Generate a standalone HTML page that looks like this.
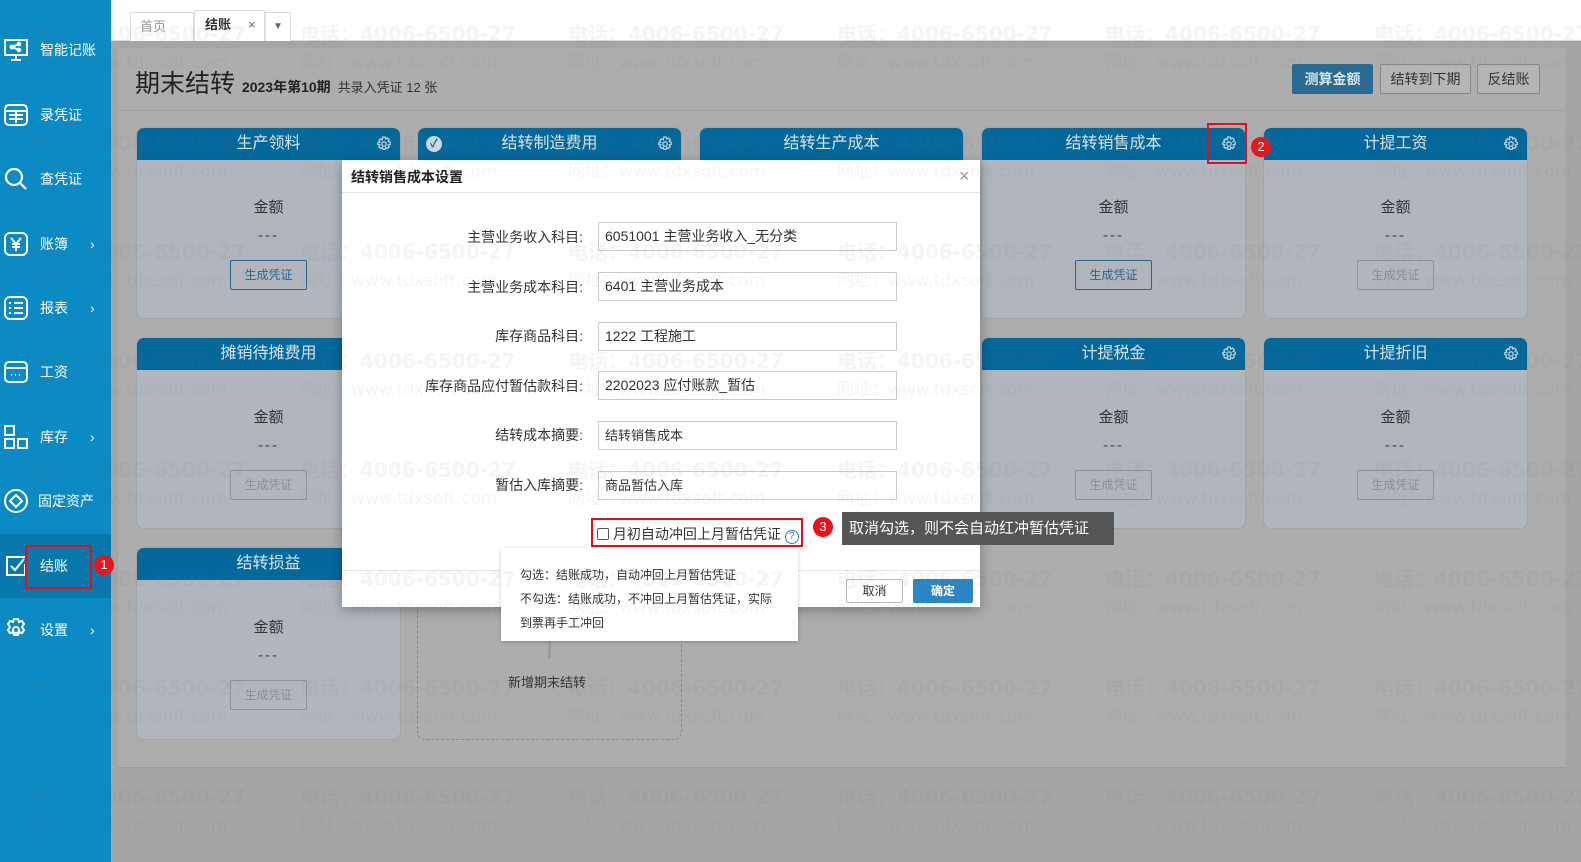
<!DOCTYPE html>
<html><head><meta charset="utf-8"><style>
*{box-sizing:border-box;margin:0;padding:0}
body{width:1581px;height:862px;overflow:hidden;position:relative;background:#a5a5a5;font-family:"Liberation Sans","Noto Sans CJK SC",sans-serif;color:#333}
.abs{position:absolute}
#side{left:0;top:0;width:111px;height:862px;background:#0b8ac3}
.si{position:absolute;left:0;width:111px;height:64px;color:#fff;font-size:14px}
.si .ic{position:absolute;left:4px;top:50%;transform:translateY(-50%);width:24px;height:24px}
.si .lb{position:absolute;left:40px;top:50%;transform:translateY(-50%)}
.si .ar{position:absolute;left:90px;top:50%;transform:translateY(-50%);font-size:14px}
#tabs{left:111px;top:0;width:1470px;height:41px;background:#fff;border-bottom:1px solid #ddd}
.tab{position:absolute;top:12px;height:29px;border:1px solid #ddd;border-bottom:none;font-size:13px;line-height:28px;background:#fff}
#panel{left:118px;top:48px;width:1447px;height:720px;background:#adadad;border-bottom:1px solid #9c9c9c}
.card{position:absolute;width:265px;border:1px solid #9fa5ab;border-radius:8px;background:#b0b6bc;overflow:hidden}
.card .hd{height:32px;background:#05689b;color:#d8e4ec;font-size:16px;text-align:center;line-height:32px;position:relative}
.card .amt{text-align:center;font-size:15px;color:#333;margin-top:36px}
.card .dash{text-align:center;font-size:15px;color:#444;margin-top:10px;letter-spacing:2px}
.card .btn{width:77px;height:30px;margin:16px auto 0;border:1px solid #8d9196;border-radius:2px;font-size:12px;text-align:center;line-height:28px;color:#8b8f93}
.card .btn.on{border-color:#2a6590;color:#2a6590}
.gear{position:absolute;right:8px;top:8px;width:16px;height:16px}
#modal{left:342px;top:160px;width:638px;height:447px;background:#fff;box-shadow:0 3px 12px rgba(0,0,0,.3)}
.fl{position:absolute;right:397px;font-size:14px;color:#333;text-align:right;white-space:nowrap}
.in{position:absolute;left:256px;width:299px;height:29px;border:1px solid #ccc;font-size:14px;line-height:27px;padding-left:6px;color:#333}
.wm{position:absolute;font-size:20px;font-weight:bold;color:rgba(110,110,110,.07);white-space:nowrap;pointer-events:none;font-family:"DejaVu Sans","Noto Sans CJK SC",sans-serif}
.wm2{position:absolute;font-size:17px;color:rgba(110,110,110,.07);white-space:nowrap;pointer-events:none;font-family:"DejaVu Sans","Noto Sans CJK SC",sans-serif}
.badge{position:absolute;width:20px;height:20px;border-radius:50%;background:#e8141b;color:#fff;font-size:13px;text-align:center;line-height:20px}
.redbox{position:absolute;border:2px solid #e2101a}
</style></head><body>

<div id="side" class="abs">
  <div class="si" style="top:18px"><svg class="ic" viewBox="0 0 24 24" fill="none" stroke="#fff" stroke-width="2"><rect x="1" y="2" width="22" height="15"/><path d="M12 17v4M7 22h10"/><circle cx="8" cy="9" r="1.5" fill="#fff"/><circle cx="15" cy="6" r="1.3" fill="#fff"/><circle cx="15" cy="12" r="1.3" fill="#fff"/><path d="M8 9l7-3M8 9l7 3"/></svg><span class="lb">智能记账</span></div>
  <div class="si" style="top:83px"><svg class="ic" viewBox="0 0 24 24" fill="none" stroke="#fff" stroke-width="2"><rect x="1" y="2" width="22" height="20" rx="4"/><path d="M1 8h22M5 12h14M5 16h14M12 8v12"/></svg><span class="lb">录凭证</span></div>
  <div class="si" style="top:147px"><svg class="ic" viewBox="0 0 24 24" fill="none" stroke="#fff" stroke-width="2.2"><circle cx="10" cy="10" r="8"/><path d="M16 16l6 6"/></svg><span class="lb">查凭证</span></div>
  <div class="si" style="top:212px"><svg class="ic" viewBox="0 0 24 24" fill="none" stroke="#fff" stroke-width="2"><rect x="1" y="1" width="22" height="22" rx="5"/><path d="M7 6l5 6 5-6M12 12v7M8 12h8M8 15h8"/></svg><span class="lb">账簿</span><span class="ar">›</span></div>
  <div class="si" style="top:276px"><svg class="ic" viewBox="0 0 24 24" fill="none" stroke="#fff" stroke-width="2"><rect x="1" y="1" width="22" height="22" rx="5"/><path d="M5 7h2M10 7h9M5 12h2M10 12h9M5 17h2M10 17h9"/></svg><span class="lb">报表</span><span class="ar">›</span></div>
  <div class="si" style="top:340px"><svg class="ic" viewBox="0 0 24 24" fill="none" stroke="#fff" stroke-width="2"><rect x="1" y="2" width="22" height="20" rx="4"/><path d="M1 8h22M7 15h1M11 15h1M15 15h1"/></svg><span class="lb">工资</span></div>
  <div class="si" style="top:405px"><svg class="ic" viewBox="0 0 24 24" fill="none" stroke="#fff" stroke-width="2"><rect x="1" y="1" width="9" height="9"/><rect x="1" y="14" width="9" height="9"/><rect x="14" y="14" width="9" height="9"/></svg><span class="lb">库存</span><span class="ar">›</span></div>
  <div class="si" style="top:469px"><svg class="ic" viewBox="0 0 24 24" fill="none" stroke="#fff" stroke-width="2"><circle cx="12" cy="12" r="11"/><path d="M12 6l6 6-6 6-6-6z"/></svg><span class="lb" style="left:38px">固定资产</span></div>
  <div class="si" style="top:534px;background:#0878ac"><svg class="ic" viewBox="0 0 24 24" fill="none" stroke="#fff" stroke-width="2"><path d="M21 3H3v18h18V10"/><path d="M7 12l4 4 9-11"/></svg><span class="lb">结账</span></div>
  <div class="si" style="top:598px"><svg class="ic" viewBox="0 0 24 24" fill="none" stroke="#fff" stroke-width="2"><path d="M10 1h4l1 3 3-1 2 3-2 3 2 3-2 3-3-1-1 3h-4l-1-3-3 1-2-3 2-3-2-3 2-3 3 1z"/><circle cx="12" cy="12" r="3"/></svg><span class="lb">设置</span><span class="ar">›</span></div>
</div>
<div class="redbox" style="left:25px;top:545px;width:67px;height:44px"></div>
<div class="badge" style="left:94px;top:555px">1</div>

<div id="tabs" class="abs">
  <div class="tab" style="left:19px;width:64px;color:#999;padding-left:9px">首页</div>
  <div class="tab" style="left:83px;width:71px;font-weight:bold;color:#333;padding-left:10px;top:10px;height:31px">结账<span style="position:absolute;left:53px;font-weight:normal;color:#666">×</span></div>
  <div class="tab" style="left:154px;width:26px;text-align:center;color:#666;font-size:10px">▼</div>
</div>

<div id="panel" class="abs">
  <div class="abs" style="left:17px;top:16px;font-size:25px;color:#222">期末结转 <span style="font-size:14px;font-weight:bold">2023年第10期</span> <span style="font-size:13px;color:#333">共录入凭证 12 张</span></div>
  <div class="abs" style="left:0;top:62px;width:1447px;border-top:1px solid #a0a0a0"></div>
  <div class="abs" style="left:1174px;top:16px;width:81px;height:30px;background:#2a6b93;border-radius:2px;color:#d8e4ec;font-size:14px;font-weight:bold;text-align:center;line-height:30px">测算金额</div>
  <div class="abs" style="left:1262px;top:16px;width:91px;height:30px;border:1px solid #888;border-radius:2px;font-size:14px;text-align:center;line-height:28px;background:#b5b5b5">结转到下期</div>
  <div class="abs" style="left:1359px;top:16px;width:63px;height:30px;border:1px solid #888;border-radius:2px;font-size:14px;text-align:center;line-height:28px;background:#b5b5b5">反结账</div>
</div>

<div class="card" style="left:136px;top:127px;height:192px"><div class="hd">生产领料<svg class="gear" viewBox="0 0 16 16" fill="none" stroke="#c0d4e2" stroke-width="1.3"><path d="M6.8 1h2.4l.5 2 1.8-1 1.7 1.7-1 1.8 2 .5v2.4l-2 .5 1 1.8-1.7 1.7-1.8-1-.5 2H6.8l-.5-2-1.8 1-1.7-1.7 1-1.8-2-.5V6.8l2-.5-1-1.8 1.7-1.7 1.8 1z"/><circle cx="8" cy="8" r="2.2"/></svg></div><div class="amt">金额</div><div class="dash">---</div><div class="btn on">生成凭证</div></div>
<div class="card" style="left:417px;top:127px;height:192px"><div class="hd"><span style="position:absolute;left:8px;top:8px;width:16px;height:16px;border-radius:50%;background:#cfdbe4;color:#05689b;font-size:11px;line-height:16px;font-weight:bold">✓</span>结转制造费用<svg class="gear" viewBox="0 0 16 16" fill="none" stroke="#c0d4e2" stroke-width="1.3"><path d="M6.8 1h2.4l.5 2 1.8-1 1.7 1.7-1 1.8 2 .5v2.4l-2 .5 1 1.8-1.7 1.7-1.8-1-.5 2H6.8l-.5-2-1.8 1-1.7-1.7 1-1.8-2-.5V6.8l2-.5-1-1.8 1.7-1.7 1.8 1z"/><circle cx="8" cy="8" r="2.2"/></svg></div></div>
<div class="card" style="left:699px;top:127px;height:192px"><div class="hd">结转生产成本</div></div>
<div class="card" style="left:981px;top:127px;height:192px"><div class="hd">结转销售成本<svg class="gear" viewBox="0 0 16 16" fill="none" stroke="#c0d4e2" stroke-width="1.3"><path d="M6.8 1h2.4l.5 2 1.8-1 1.7 1.7-1 1.8 2 .5v2.4l-2 .5 1 1.8-1.7 1.7-1.8-1-.5 2H6.8l-.5-2-1.8 1-1.7-1.7 1-1.8-2-.5V6.8l2-.5-1-1.8 1.7-1.7 1.8 1z"/><circle cx="8" cy="8" r="2.2"/></svg></div><div class="amt">金额</div><div class="dash">---</div><div class="btn on">生成凭证</div></div>
<div class="card" style="left:1263px;top:127px;height:192px"><div class="hd">计提工资<svg class="gear" viewBox="0 0 16 16" fill="none" stroke="#c0d4e2" stroke-width="1.3"><path d="M6.8 1h2.4l.5 2 1.8-1 1.7 1.7-1 1.8 2 .5v2.4l-2 .5 1 1.8-1.7 1.7-1.8-1-.5 2H6.8l-.5-2-1.8 1-1.7-1.7 1-1.8-2-.5V6.8l2-.5-1-1.8 1.7-1.7 1.8 1z"/><circle cx="8" cy="8" r="2.2"/></svg></div><div class="amt">金额</div><div class="dash">---</div><div class="btn">生成凭证</div></div>
<div class="card" style="left:136px;top:337px;height:192px"><div class="hd">摊销待摊费用</div><div class="amt">金额</div><div class="dash">---</div><div class="btn">生成凭证</div></div>
<div class="card" style="left:981px;top:337px;height:192px"><div class="hd">计提税金<svg class="gear" viewBox="0 0 16 16" fill="none" stroke="#c0d4e2" stroke-width="1.3"><path d="M6.8 1h2.4l.5 2 1.8-1 1.7 1.7-1 1.8 2 .5v2.4l-2 .5 1 1.8-1.7 1.7-1.8-1-.5 2H6.8l-.5-2-1.8 1-1.7-1.7 1-1.8-2-.5V6.8l2-.5-1-1.8 1.7-1.7 1.8 1z"/><circle cx="8" cy="8" r="2.2"/></svg></div><div class="amt">金额</div><div class="dash">---</div><div class="btn">生成凭证</div></div>
<div class="card" style="left:1263px;top:337px;height:192px"><div class="hd">计提折旧<svg class="gear" viewBox="0 0 16 16" fill="none" stroke="#c0d4e2" stroke-width="1.3"><path d="M6.8 1h2.4l.5 2 1.8-1 1.7 1.7-1 1.8 2 .5v2.4l-2 .5 1 1.8-1.7 1.7-1.8-1-.5 2H6.8l-.5-2-1.8 1-1.7-1.7 1-1.8-2-.5V6.8l2-.5-1-1.8 1.7-1.7 1.8 1z"/><circle cx="8" cy="8" r="2.2"/></svg></div><div class="amt">金额</div><div class="dash">---</div><div class="btn">生成凭证</div></div>
<div class="card" style="left:136px;top:547px;height:193px"><div class="hd">结转损益</div><div class="amt">金额</div><div class="dash">---</div><div class="btn">生成凭证</div></div>
<div class="abs" style="left:417px;top:547px;width:265px;height:193px;border:1px dashed #888;border-radius:8px"></div>
<div class="abs" style="left:548px;top:640px;width:3px;height:18px;background:#999"></div>
<div class="abs" style="left:508px;top:672px;font-size:13px;color:#333">新增期末结转</div>

<div class="redbox" style="left:1207px;top:123px;width:40px;height:41px"></div>
<div class="badge" style="left:1251px;top:137px">2</div>

<div id="modal" class="abs">
  <div class="abs" style="left:0;top:0;width:638px;height:33px;border-bottom:1px solid #e5e5e5;font-size:14px;font-weight:bold;color:#222;padding:7px 0 0 9px">结转销售成本设置</div>
  <div class="abs" style="left:617px;top:6px;font-size:18px;color:#999">×</div>
  <div class="fl" style="top:67px">主营业务收入科目:</div><div class="in" style="top:62px">6051001 主营业务收入_无分类</div>
  <div class="fl" style="top:117px">主营业务成本科目:</div><div class="in" style="top:112px">6401 主营业务成本</div>
  <div class="fl" style="top:166px">库存商品科目:</div><div class="in" style="top:162px">1222 工程施工</div>
  <div class="fl" style="top:216px">库存商品应付暂估款科目:</div><div class="in" style="top:211px">2202023 应付账款_暂估</div>
  <div class="fl" style="top:265px">结转成本摘要:</div><div class="in" style="top:261px;font-size:13px">结转销售成本</div>
  <div class="fl" style="top:315px">暂估入库摘要:</div><div class="in" style="top:311px;font-size:13px">商品暂估入库</div>
  <div class="abs" style="left:255px;top:364px;font-size:14px;color:#333;white-space:nowrap"><span style="display:inline-block;width:12px;height:12px;border:1px solid #555;border-radius:2px;vertical-align:-1px"></span> 月初自动冲回上月暂估凭证 <span style="display:inline-block;width:14px;height:14px;border:1px solid #2a86c8;border-radius:50%;color:#2a86c8;font-size:10px;text-align:center;line-height:12px">?</span></div>
  <div class="abs" style="left:0;top:410px;width:638px;border-top:1px solid #e5e5e5"></div>
  <div class="abs" style="left:504px;top:419px;width:57px;height:24px;border:1px solid #bbb;border-radius:2px;font-size:12px;text-align:center;line-height:22px">取消</div>
  <div class="abs" style="left:571px;top:419px;width:60px;height:24px;background:#2b86c5;border-radius:2px;color:#fff;font-weight:bold;font-size:12px;text-align:center;line-height:24px">确定</div>
</div>
<div class="redbox" style="left:591px;top:518px;width:212px;height:29px"></div>
<div class="badge" style="left:813px;top:517px">3</div>
<div class="abs" style="left:836px;top:522px;width:0;height:0;border:6px solid transparent;border-right-color:#555"></div>
<div class="abs" style="left:842px;top:512px;width:272px;height:33px;background:#555;color:#fff;font-size:15px;line-height:33px;padding-left:7px">取消勾选，则不会自动红冲暂估凭证</div>
<div class="abs" style="left:501px;top:548px;width:297px;height:93px;background:#fff;box-shadow:0 1px 4px rgba(0,0,0,.2);font-size:12px;color:#333;padding:15px 0 0 19px;line-height:24px">勾选：结账成功，自动冲回上月暂估凭证<br>不勾选：结账成功，不冲回上月暂估凭证，实际<br>到票再手工冲回</div>

<div id="wms"></div>
<script>
(function(){var h='';var xs=[30,300,568,837,1105,1374];for(var r=0;r<8;r++){var y=18+r*109;for(var i=0;i<xs.length;i++){h+='<div class="wm" style="left:'+xs[i]+'px;top:'+y+'px">电话：4006-6500-27</div><div class="wm2" style="left:'+xs[i]+'px;top:'+(y+30)+'px">网址：www.tdxsoft.com</div>';}}document.getElementById('wms').innerHTML=h;})();
</script>
</body></html>
